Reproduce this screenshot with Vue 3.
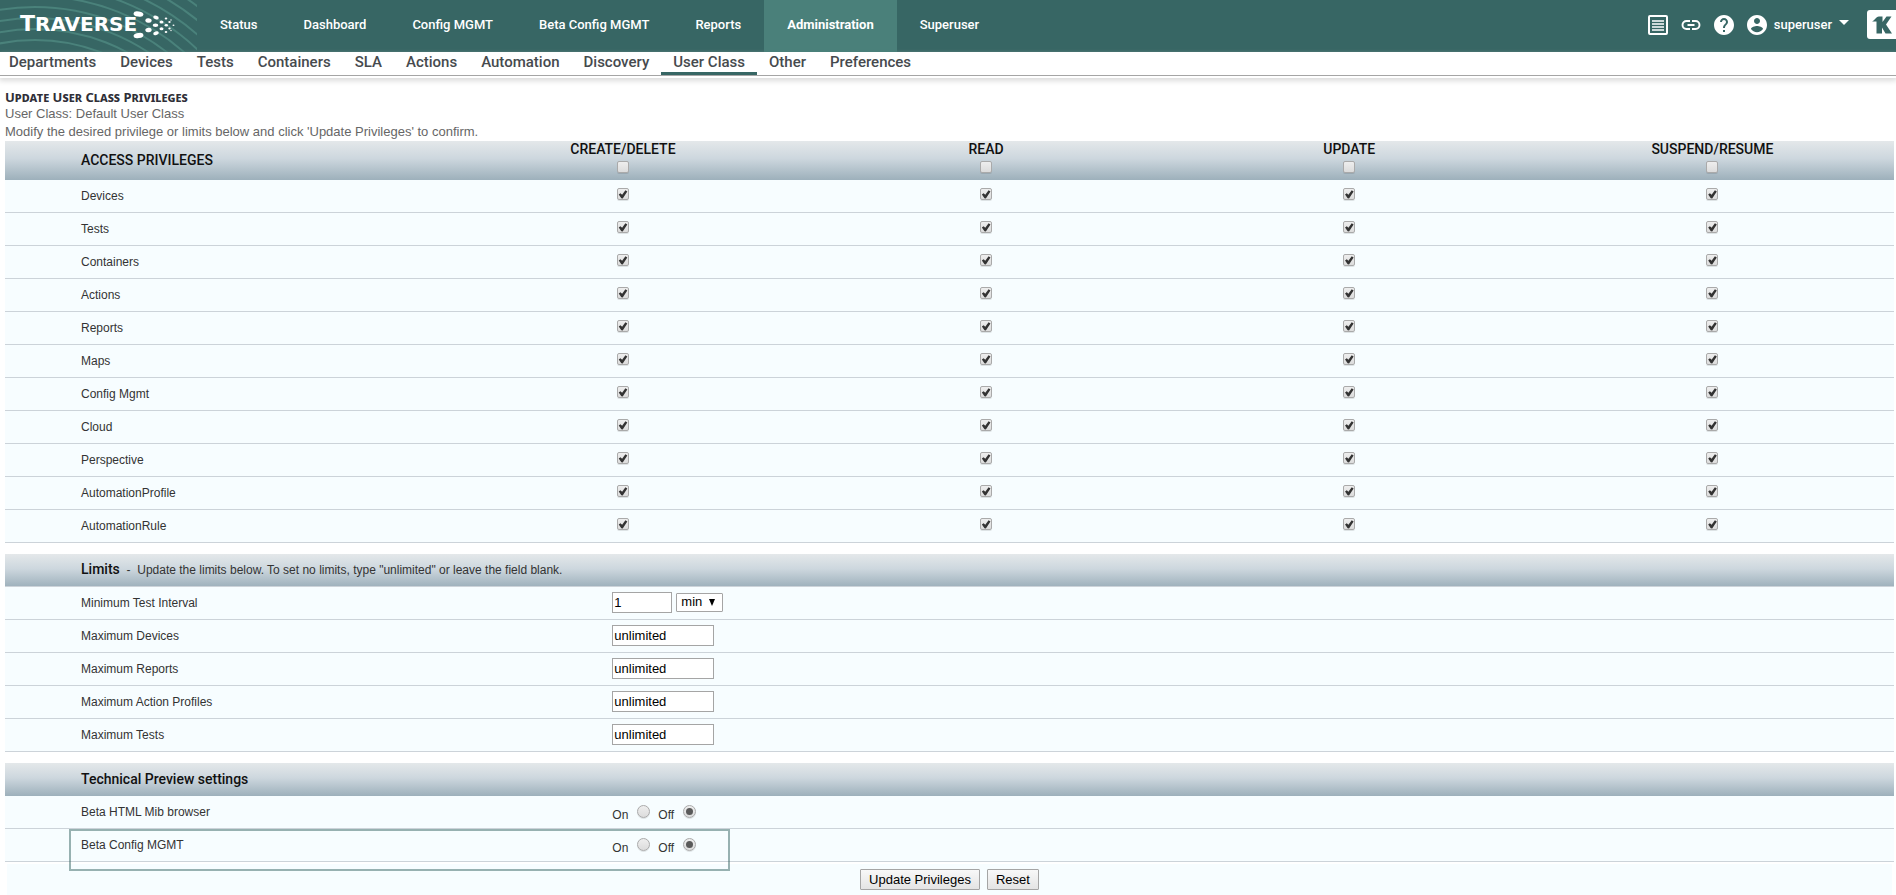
<script setup>
import { ref, reactive } from 'vue'

const mainNav = ['Status', 'Dashboard', 'Config MGMT', 'Beta Config MGMT', 'Reports', 'Administration', 'Superuser']
const subNav = ['Departments', 'Devices', 'Tests', 'Containers', 'SLA', 'Actions', 'Automation', 'Discovery', 'User Class', 'Other', 'Preferences']
const operations = ['CREATE/DELETE', 'READ', 'UPDATE', 'SUSPEND/RESUME']
const resources = ['Devices', 'Tests', 'Containers', 'Actions', 'Reports', 'Maps', 'Config Mgmt', 'Cloud', 'Perspective', 'AutomationProfile', 'AutomationRule']

const allChecked = reactive(operations.map(() => false))
const grants = reactive(resources.map(() => operations.map(() => true)))
const toggleColumn = (col) => grants.forEach((row) => { row[col] = allChecked[col] })

const interval = ref('1')
const unit = ref('min')
const limits = reactive([
  { label: 'Maximum Devices', value: 'unlimited' },
  { label: 'Maximum Reports', value: 'unlimited' },
  { label: 'Maximum Action Profiles', value: 'unlimited' },
  { label: 'Maximum Tests', value: 'unlimited' }
])
const previews = reactive([
  { label: 'Beta HTML Mib browser', value: 'off', marked: false },
  { label: 'Beta Config MGMT', value: 'off', marked: true }
])

const rings = Array.from({ length: 15 }, (_, i) => 182 + i * 11)
const dots = [
  [138.5, 14, 5, 2.6, 10], [148.5, 20.5, 3.2, 2.3, 10], [148.5, 30, 3.2, 2.3, -10], [138.5, 35.5, 5, 2.6, -10],
  [156, 17.5, 2.8, 1.8, 15], [155.5, 25.3, 2.8, 1.8, 0], [156, 33.3, 2.8, 1.8, -15],
  [161.5, 22, 2, 1.5, 0], [161.5, 28.8, 2, 1.5, 0], [166, 18.5, 1.3, 1.1, 0], [166.3, 25.3, 1.7, 1.3, 0],
  [166, 32, 1.3, 1.1, 0], [169.5, 22, 1.2, 1, 0], [169.5, 28.5, 1.2, 1, 0], [173.5, 25.3, 1, 0.8, 0], [171, 20, 0.7, 0.7, 0], [171, 30.5, 0.7, 0.7, 0]
]
</script>

<template>
  <div class="page">
    <header class="topbar">
      <a class="brand" href="#">
        <svg class="brand-art" viewBox="0 0 197 52" aria-hidden="true">
          <g fill="none" stroke="#4a827b" stroke-width="2">
            <circle v-for="r in rings" :key="r" cx="35" cy="222" :r="r" />
          </g>
          <ellipse v-for="(d, i) in dots" :key="i" :cx="d[0]" :cy="d[1]" :rx="d[2]" :ry="d[3]" :transform="`rotate(${d[4]} ${d[0]} ${d[1]})`" fill="#fff" />
        </svg>
        <span class="brand-name"><span class="brand-initial">T</span>RAVERSE</span>
      </a>
      <nav class="main-nav">
        <a v-for="item in mainNav" :key="item" href="#" :class="{ active: item === 'Administration' }">{{ item }}</a>
      </nav>
      <div class="tools">
        <button type="button" aria-label="Messages">
          <svg width="20" height="20" viewBox="0 0 20 20">
            <rect x="1" y="1" width="18" height="18" rx="1" fill="none" stroke="#fff" stroke-width="2" />
            <path d="M4 6h12M4 9h12M4 12h12M4 15h12" stroke="#fff" stroke-width="1.4" />
          </svg>
        </button>
        <button type="button" aria-label="Links">
          <svg width="20" height="20" viewBox="0 0 20 20">
            <path d="M9 6H5.500a4 4 0 0 0 0 8H9M11 6h3.500a4 4 0 0 1 0 8H11M6.500 10h7" fill="none" stroke="#fff" stroke-width="1.9" />
          </svg>
        </button>
        <button type="button" aria-label="Help">
          <svg width="20" height="20" viewBox="2 2 20 20">
            <path fill="#fff" d="M12 2C6.480 2 2 6.480 2 12s4.480 10 10 10 10-4.480 10-10S17.520 2 12 2zm1 17h-2v-2h2v2zm2.070-7.750-.9.920C13.450 12.900 13 13.500 13 15h-2v-.5c0-1.100.45-2.100 1.170-2.830l1.240-1.260c.37-.36.59-.86.59-1.410 0-1.100-.9-2-2-2s-2 .9-2 2H8c0-2.210 1.790-4 4-4s4 1.790 4 4c0 .88-.36 1.680-.93 2.250z" />
          </svg>
        </button>
        <button type="button" class="user">
          <svg width="20" height="20" viewBox="2 2 20 20">
            <path fill="#fff" d="M12 2C6.480 2 2 6.480 2 12s4.480 10 10 10 10-4.480 10-10S17.520 2 12 2zm0 3c1.660 0 3 1.340 3 3s-1.340 3-3 3-3-1.340-3-3 1.340-3 3-3zm0 14.200c-2.500 0-4.710-1.280-6-3.220.03-1.990 4-3.080 6-3.080 1.990 0 5.970 1.090 6 3.080-1.290 1.940-3.500 3.220-6 3.220z" />
          </svg>
          <span>superuser</span>
          <svg class="caret" width="10" height="8" viewBox="0 0 10 8"><path d="M0 0h10L5 5z" fill="#fff" /></svg>
        </button>
        <a class="k-logo" href="#" aria-label="Home">
          <svg width="29" height="29" viewBox="0 0 29 29">
            <path d="M3 0h26v29H3a3 3 0 0 1-3-3V3a3 3 0 0 1 3-3z" fill="#fff" />
            <path d="M5 11.500C8 10.500 8.500 7 12 6.500h3.500V12l4-5.500h5L19 14.500l6 9h-6.500l-3.500-6v6H9.500v-12z" fill="#376664" />
          </svg>
        </a>
      </div>
    </header>

    <nav class="sub-nav">
      <a v-for="item in subNav" :key="item" href="#" :class="{ active: item === 'User Class' }">{{ item }}</a>
    </nav>

    <main class="content">
      <h1>Update User Class Privileges</h1>
      <p>User Class: Default User Class</p>
      <p>Modify the desired privilege or limits below and click 'Update Privileges' to confirm.</p>

      <form @submit.prevent>
        <table class="privileges">
          <colgroup>
            <col class="resource-col">
            <col v-for="op in operations" :key="op">
          </colgroup>
          <thead>
            <tr>
              <th class="name" scope="col">ACCESS PRIVILEGES</th>
              <th v-for="(op, c) in operations" :key="op" scope="col">
                <label>{{ op }}<input v-model="allChecked[c]" type="checkbox" @change="toggleColumn(c)"></label>
              </th>
            </tr>
          </thead>
          <tbody>
            <tr v-for="(res, r) in resources" :key="res">
              <th class="name" scope="row">{{ res }}</th>
              <td v-for="(op, c) in operations" :key="op">
                <input v-model="grants[r][c]" type="checkbox" :aria-label="`${res} ${op}`">
              </td>
            </tr>
          </tbody>
        </table>

        <table class="settings">
          <colgroup>
            <col class="setting-col">
            <col>
          </colgroup>
          <thead>
            <tr>
              <th colspan="2" class="name ruled" scope="colgroup">Limits <span>&nbsp;-&nbsp; Update the limits below. To set no limits, type "unlimited" or leave the field blank.</span></th>
            </tr>
          </thead>
          <tbody>
            <tr>
              <th class="name" scope="row"><label for="interval">Minimum Test Interval</label></th>
              <td>
                <div class="fields">
                  <input id="interval" v-model="interval" class="short" type="text">
                  <span class="select-box">
                    <select v-model="unit" aria-label="Interval unit">
                      <option>min</option>
                      <option>sec</option>
                    </select>
                    <svg width="6" height="7" viewBox="0 0 6 7"><path d="M0 0h6L3 7z" fill="#000" /></svg>
                  </span>
                </div>
              </td>
            </tr>
            <tr v-for="(limit, i) in limits" :key="limit.label">
              <th class="name" scope="row"><label :for="`limit-${i}`">{{ limit.label }}</label></th>
              <td><div class="fields"><input :id="`limit-${i}`" v-model="limit.value" type="text"></div></td>
            </tr>
          </tbody>
        </table>

        <table class="settings">
          <colgroup>
            <col class="setting-col">
            <col>
          </colgroup>
          <thead>
            <tr>
              <th colspan="2" class="name" scope="colgroup">Technical Preview settings</th>
            </tr>
          </thead>
          <tbody>
            <tr v-for="(p, i) in previews" :key="p.label">
              <th class="name" scope="row">{{ p.label }}<span v-if="p.marked" class="marker"></span></th>
              <td>
                <div class="fields radios">
                  <label>On<input v-model="p.value" type="radio" :name="`preview-${i}`" value="on"></label>
                  <label>Off<input v-model="p.value" type="radio" :name="`preview-${i}`" value="off"></label>
                </div>
              </td>
            </tr>
          </tbody>
        </table>

        <div class="actions">
          <button type="submit">Update Privileges</button>
          <button type="reset">Reset</button>
        </div>
      </form>
    </main>
  </div>
</template>

<style>
body {
  margin: 0;
  background: #fff;
}
</style>

<style scoped>
.page {
  font-family: "Liberation Sans", Arial, sans-serif;
  font-size: 12px;
  color: #333;
}

a {
  text-decoration: none;
}

.topbar {
  display: flex;
  height: 52px;
  background: #376664;
}

.brand {
  position: relative;
  flex: none;
  width: 197px;
  overflow: hidden;
}

.brand-art {
  display: block;
  width: 197px;
  height: 52px;
}

.brand-name {
  position: absolute;
  left: 20px;
  top: 10px;
  font: bold 20px/28px "DejaVu Sans", sans-serif;
  color: #fff;
}

.brand-initial {
  font-size: 22px;
}

.main-nav {
  display: flex;
}

.main-nav a {
  padding: 0 23px;
  font: 500 13px/49px Roboto, sans-serif;
  color: #fff;
  white-space: nowrap;
}

.main-nav a.active {
  background: #4a807a;
  font-weight: 700;
}

.tools {
  display: flex;
  align-items: center;
  gap: 13px;
  margin-left: auto;
  padding-bottom: 3px;
}

.tools button {
  display: flex;
  align-items: center;
  padding: 0;
  border: 0;
  background: none;
  color: #fff;
}

.tools .user {
  gap: 7px;
  font: 500 13px/20px Roboto, sans-serif;
}

.tools .caret {
  margin-top: -2px;
}

.k-logo {
  display: flex;
  margin-left: 5px;
}

.sub-nav {
  display: flex;
  height: 23px;
  border-bottom: 1px solid #a5a5a5;
  box-shadow: 0 2px 0 #fff, 0 4px 5px 1px #ddd;
}

.sub-nav a {
  box-sizing: border-box;
  height: 23px;
  padding: 0 12px;
  font: 500 15px/20px Roboto, sans-serif;
  color: #464a4e;
  white-space: nowrap;
}

.sub-nav a:first-child {
  padding-left: 9px;
}

.sub-nav a.active {
  border-bottom: 3px solid #376664;
}

.content {
  padding: 12px 2px 0 5px;
}

h1 {
  margin: 0;
  font: bold small-caps 13px/18px "Noto Sans", sans-serif;
  color: #2f2f38;
}

p {
  margin: 0;
  font-size: 13px;
  line-height: 16px;
  color: #666;
}

p + p {
  line-height: 20px;
  height: 19px;
}

table {
  width: 100%;
  margin-bottom: 11px;
  border-collapse: separate;
  border-spacing: 0;
  table-layout: fixed;
}

.resource-col {
  width: 23.1%;
}

.setting-col {
  width: 32.15%;
}

thead tr {
  background: linear-gradient(#e4e8ea, #cdd7de 45%, #9db0bb);
}

thead th {
  height: 33px;
  box-sizing: border-box;
  padding: 0 0 2px;
  font: 500 14px/16px Roboto, sans-serif;
  color: #111;
}

thead .name span {
  font: 12px/16px "Liberation Sans", Arial, sans-serif;
  color: #333;
}

.name {
  text-align: left;
}

th.name {
  padding-left: 76px;
}

.ruled {
  border-bottom: 1px solid #ccd3d9;
}

.privileges thead th {
  height: 39px;
}

.privileges thead label {
  display: flex;
  flex-direction: column;
  align-items: center;
  gap: 4px;
  padding-bottom: 5px;
}

tbody tr {
  position: relative;
  background: #f7fdff;
}

tbody th,
tbody td {
  box-sizing: border-box;
  height: 33px;
  padding: 0 0 2px;
  border-bottom: 1px solid #ccd3d9;
  font-weight: normal;
  vertical-align: middle;
}

tbody th {
  padding-bottom: 0;
}

.privileges tbody td {
  padding-bottom: 5px;
  text-align: center;
}

input[type="checkbox"],
input[type="radio"] {
  display: inline-block;
  box-sizing: border-box;
  width: 12px;
  height: 12px;
  margin: 0;
  appearance: none;
  border: 1px solid #aaa;
  border-radius: 2px;
  background: linear-gradient(#eee, #dcdcdc);
  box-shadow: 0 1px 0 rgba(0, 0, 0, 0.1);
  vertical-align: middle;
}

input[type="checkbox"]:checked::before {
  content: "";
  display: block;
  width: 10px;
  height: 10px;
  background: #333;
  clip-path: polygon(8% 52%, 25% 38%, 42% 55%, 75% 8%, 94% 22%, 48% 92%, 34% 90%);
}

input[type="radio"] {
  width: 13px;
  height: 13px;
  border-radius: 50%;
}

input[type="radio"]:checked::before {
  content: "";
  display: block;
  width: 7px;
  height: 7px;
  margin: 2px;
  border-radius: 50%;
  background: #5a5a5a;
}

.fields {
  display: flex;
  align-items: center;
  gap: 4px;
}

input[type="text"] {
  box-sizing: border-box;
  width: 102px;
  height: 21px;
  padding: 0 1px;
  border: 1px solid #a5a5a5;
  background: #fff;
  font: 13px/19px "Liberation Sans", Arial, sans-serif;
  color: #000;
}

input.short {
  width: 60px;
}

.select-box {
  position: relative;
  display: flex;
}

.select-box svg {
  position: absolute;
  right: 8px;
  top: 6px;
  pointer-events: none;
}

select {
  box-sizing: border-box;
  width: 47px;
  height: 19px;
  padding: 0 0 0 4px;
  appearance: none;
  border: 1px solid #a5a5a5;
  border-radius: 1px;
  background: #fff;
  font: 13px/16px "Liberation Sans", Arial, sans-serif;
  color: #000;
}

.radios {
  gap: 8px;
  padding-top: 7px;
}

.radios label {
  display: flex;
  align-items: flex-start;
  gap: 9px;
  line-height: 20px;
}

.marker {
  position: absolute;
  left: 64px;
  top: 0;
  box-sizing: border-box;
  width: 35%;
  height: 42px;
  border: 2px solid rgba(55, 102, 100, 0.5);
  pointer-events: none;
}

.settings:last-of-type {
  margin-bottom: 2px;
}

.actions {
  display: flex;
  justify-content: center;
  gap: 7px;
  margin: 0 2px;
  padding: 5px 0;
  background: #f7fdff;
}

.actions button {
  box-sizing: border-box;
  height: 21px;
  padding: 0 8px;
  border: 1px solid #a5a5a5;
  border-radius: 1px;
  background: linear-gradient(#f8f8f8, #e4e4e4);
  font: 13px/18px "Liberation Sans", Arial, sans-serif;
  color: #000;
}
</style>
